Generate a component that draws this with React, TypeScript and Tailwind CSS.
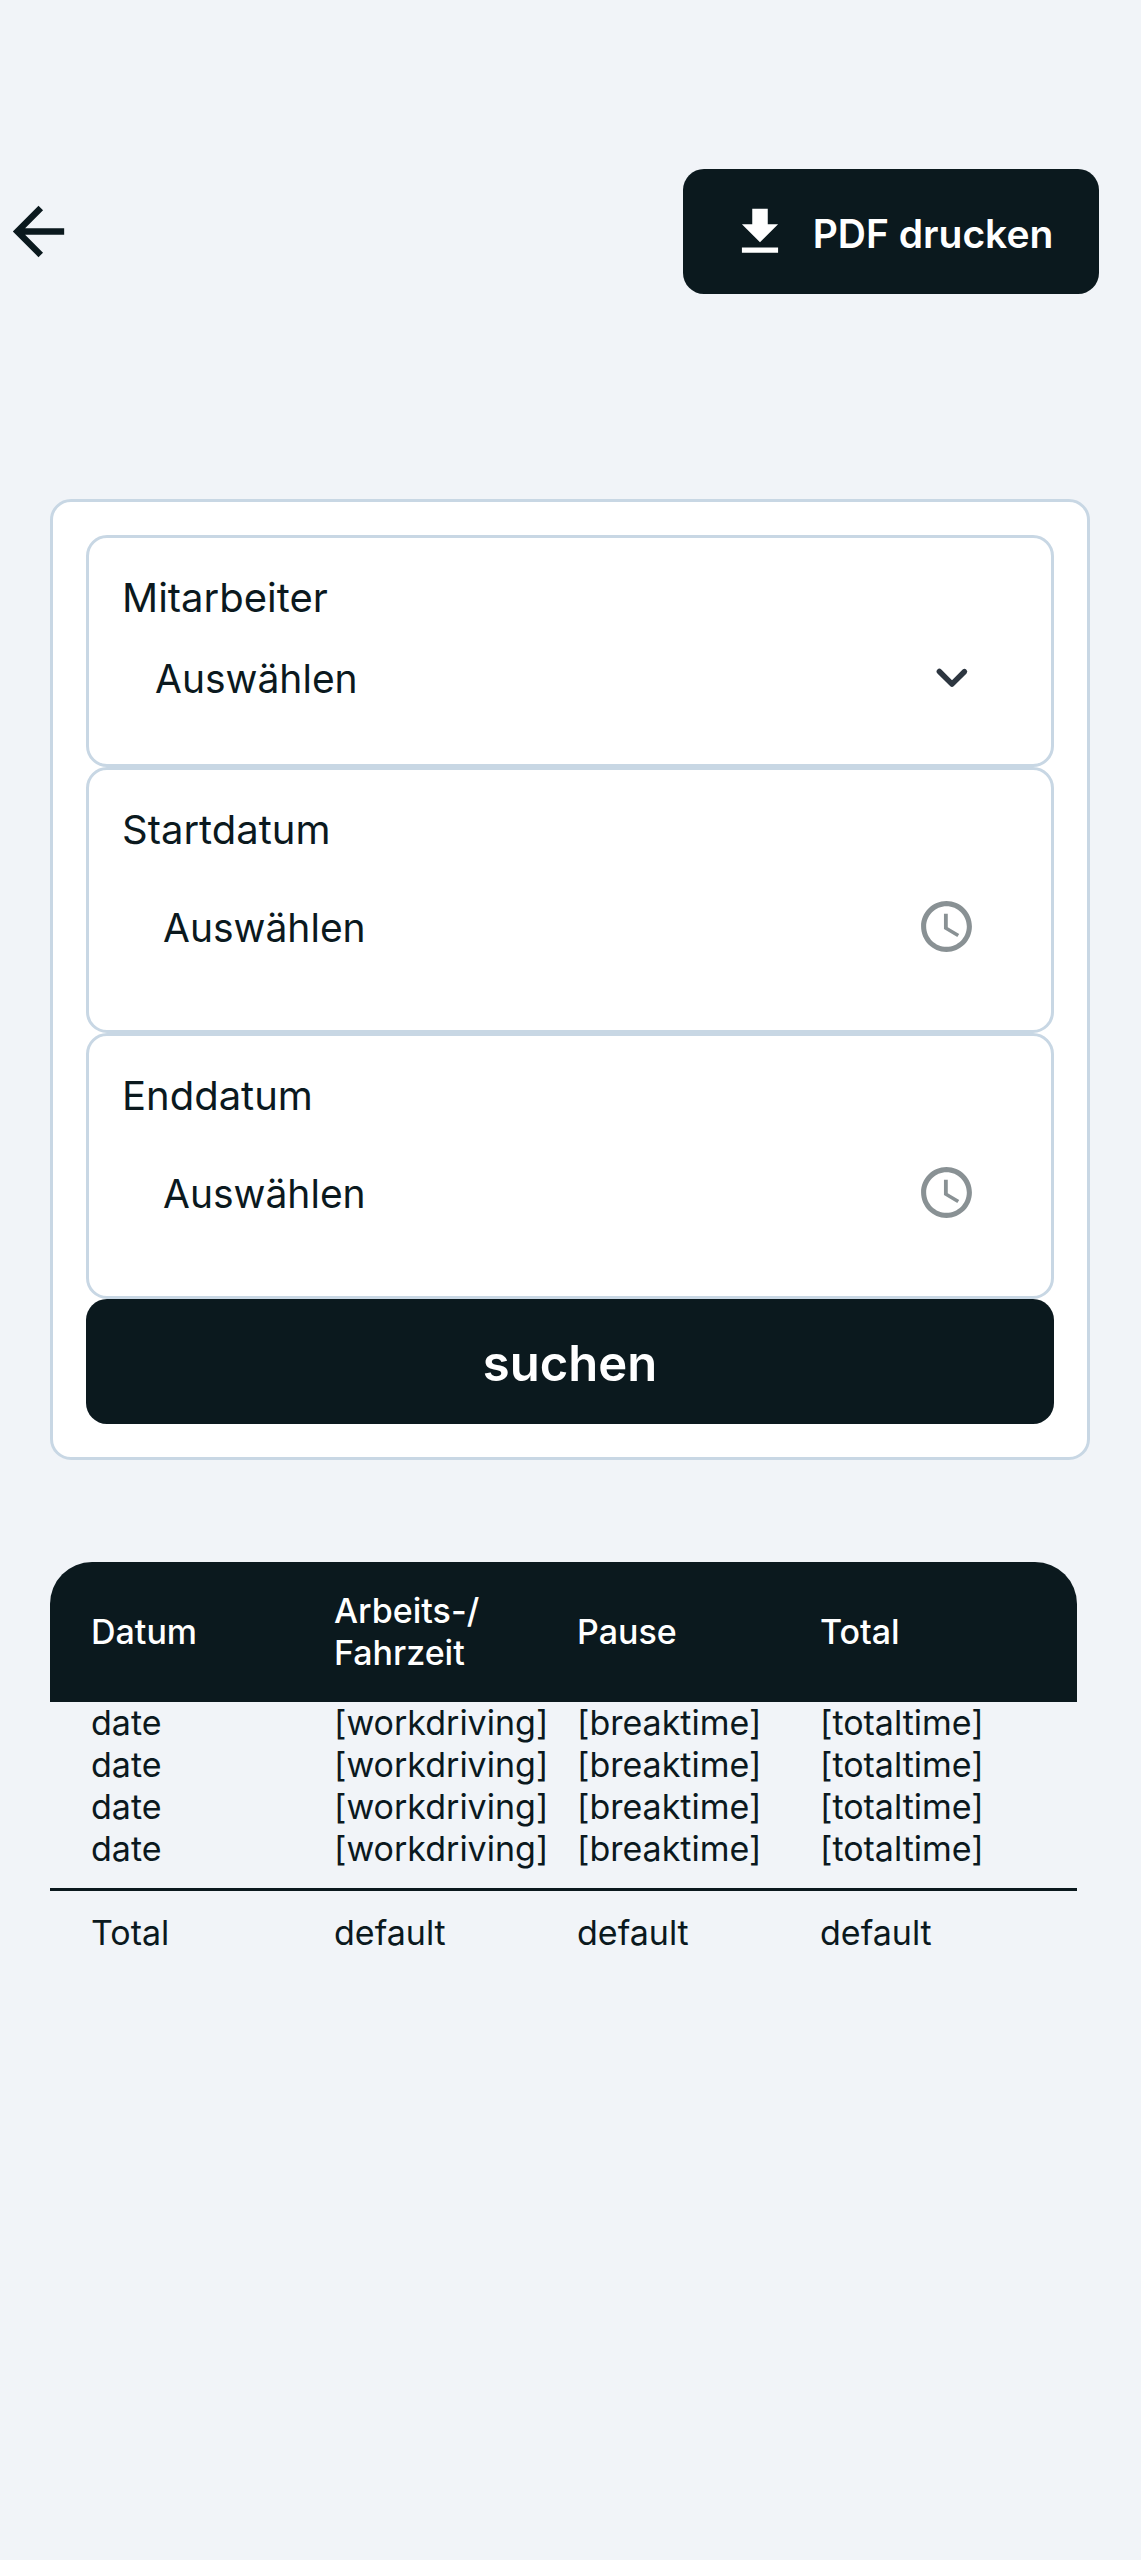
import { useState } from 'react';
import type { ReactNode } from 'react';
import { MdAccessTime, MdArrowBack, MdFileDownload } from 'react-icons/md';

interface Entry {
  date: string;
  work: string;
  pause: string;
  total: string;
}

const COLUMNS = ['Datum', 'Arbeits-/ Fahrzeit', 'Pause', 'Total'];

const ENTRIES: Entry[] = Array.from({ length: 4 }, () => ({
  date: 'date',
  work: '[workdriving]',
  pause: '[breaktime]',
  total: '[totaltime]',
}));

function ChevronDown() {
  return (
    <svg viewBox="0 0 24 24" className="size-[66px] shrink-0 pointer-events-none text-[#2d3640]" fill="currentColor" aria-hidden="true">
      <path d="M8.12 9.29L12 13.17l3.88-3.88a1 1 0 0 1 1.41 1.41l-4.59 4.59a1 1 0 0 1-1.41 0L6.7 10.7a1 1 0 0 1 1.42-1.41z" />
    </svg>
  );
}

function Field({ id, label, children }: { id: string; label: string; children: ReactNode }) {
  return (
    <div className="rounded-[21px] border-3 border-[#c8d7e4] px-[33px] py-[34px]">
      <label htmlFor={id} className="block text-[40px]">{label}</label>
      {children}
    </div>
  );
}

function DateField({ id, label }: { id: string; label: string }) {
  const [value, setValue] = useState('');
  return (
    <Field id={id} label={label}>
      <div className="flex h-[140px] items-center px-[41px]">
        <input
          id={id}
          type="text"
          value={value}
          onChange={(e) => setValue(e.target.value)}
          placeholder="Auswählen"
          className="min-w-0 flex-1 bg-transparent pt-1 outline-none placeholder:text-[#0b191e]"
        />
        <MdAccessTime className="size-[61px] shrink-0 text-[#899194]" aria-hidden="true" />
      </div>
    </Field>
  );
}

export default function App() {
  return (
    <main className="min-h-screen bg-[#f1f4f8] pt-[169px] font-['Inter',sans-serif] text-[39px] leading-[52px] text-[#0b191e]">
      <header className="flex items-center justify-between pr-[42px]">
        <button type="button" aria-label="Zurück">
          <MdArrowBack className="size-[77px]" />
        </button>
        <button
          type="button"
          className="flex h-[125px] w-[416px] items-center justify-center gap-[22px] rounded-[21px] bg-[#0b191e] font-semibold text-white"
        >
          <MdFileDownload className="size-[62px] shrink-0" />
          <span className="pt-1">PDF drucken</span>
        </button>
      </header>

      <form
        onSubmit={(e) => e.preventDefault()}
        className="ml-[50px] mr-[51px] mt-[205px] rounded-[21px] border-3 border-[#c8d7e4] bg-white p-[33px]"
      >
        <Field id="employee" label="Mitarbeiter">
          <div className="flex h-[106px] items-center px-[33px]">
            <select id="employee" className="min-w-0 flex-1 appearance-none bg-transparent pt-1 outline-none">
              <option>Auswählen</option>
            </select>
            <ChevronDown />
          </div>
        </Field>
        <DateField id="start" label="Startdatum" />
        <DateField id="end" label="Enddatum" />
        <button
          type="submit"
          className="h-[125px] w-full rounded-[21px] bg-[#0b191e] pt-1 text-[49px] font-semibold text-white"
        >
          suchen
        </button>
      </form>

      {/* Hours per day with the sum below */}
      <table className="mr-[64px] ml-[50px] mt-[102px] block text-left text-[34px] leading-[42px]">
        <thead className="block rounded-t-[42px] bg-[#0b191e] py-[28px] text-white">
          <tr className="grid grid-cols-4 items-center pr-[14px] pl-[41px]">
            {COLUMNS.map((c) => (
              <th key={c} scope="col" className="pr-[60px] font-medium">{c}</th>
            ))}
          </tr>
        </thead>
        <tbody className="block pb-[18px]">
          {ENTRIES.map((e, i) => (
            <tr key={i} className="grid grid-cols-4 pr-[14px] pl-[41px]">
              <td>{e.date}</td>
              <td>{e.work}</td>
              <td>{e.pause}</td>
              <td>{e.total}</td>
            </tr>
          ))}
        </tbody>
        <tfoot className="block border-t-3 border-[#0b191e] py-[21px]">
          <tr className="grid grid-cols-4 pr-[14px] pl-[41px]">
            <th scope="row" className="font-normal">Total</th>
            <td>default</td>
            <td>default</td>
            <td>default</td>
          </tr>
        </tfoot>
      </table>
    </main>
  );
}
